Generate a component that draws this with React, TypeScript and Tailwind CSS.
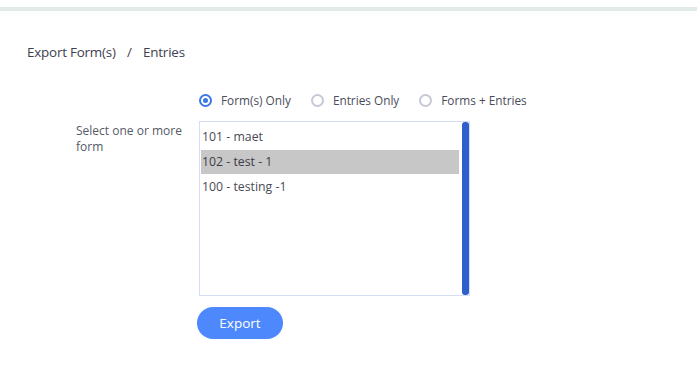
import { useState } from "react";

const forms = [
    { id: "101", label: "101 - maet" },
    { id: "102", label: "102 - test - 1" },
    { id: "100", label: "100 - testing -1" },
];

const modes = ["Form(s) Only", "Entries Only", "Forms + Entries"];

function Radio({ checked, label, onClick }: { checked: boolean; label: string; onClick: () => void }) {
    return (
        <button className="flex items-center gap-[9px]" onClick={onClick}>
            <span
                className={
                    checked
                        ? "w-[13px] h-[13px] rounded-full border-2 border-[#3b78e7] flex items-center justify-center"
                        : "w-[13px] h-[13px] rounded-full border-2 border-[#c4c9d4]"
                }
            >
                {checked && <span className="w-[5px] h-[5px] rounded-full bg-[#3b78e7]" />}
            </span>
            <span className="text-[11.8px] text-[#4a4d5a]">{label}</span>
        </button>
    );
}

export default function App() {
    const [mode, setMode] = useState(0);
    const [selected, setSelected] = useState("102");

    return (
        <div className="w-[697px] h-[391px] bg-white font-['Open_Sans',sans-serif]">
            <div className="h-[7px]" />
            <div className="h-[4px] bg-[#e2e9e9]" />

            <div className="pl-[27px] pt-[31px] text-[13.4px] text-[#3d4150] tracking-[-0.2px]">
                Export Form(s) <span className="mx-[8px]">/</span> Entries
            </div>

            <div className="pl-[199px] pt-[30px] flex gap-[20px]">
                {modes.map((m, i) => (
                    <Radio key={m} checked={mode === i} label={m} onClick={() => setMode(i)} />
                ))}
            </div>

            <div className="flex mt-[11px]">
                <div className="w-[123px] pl-[76px] pr-0 pt-[2px] text-[12px] leading-[16px] text-[#555a66] shrink-0 box-content">
                    Select one or more form
                </div>
                <div className="w-[271px] h-[175px] border border-[#d3def5] relative overflow-hidden">
                    <div className="pt-[2px] pl-px pr-[10px]">
                        {forms.map((f) => (
                            <div
                                key={f.id}
                                onClick={() => setSelected(f.id)}
                                className={
                                    selected === f.id
                                        ? "h-[24px] mt-px px-[1px] flex items-center bg-[#c7c7c7] text-[12.3px] text-[#3d3d48]"
                                        : "h-[24px] mt-px px-[1px] flex items-center text-[12.3px] text-[#4a4a55]"
                                }
                            >
                                {f.label}
                            </div>
                        ))}
                    </div>
                    <div className="absolute right-[0px] top-0 bottom-0 w-[7px] rounded-[3px] bg-[#2e5fcd]" />
                </div>
            </div>

            <div className="pl-[197px] pt-[11px]">
                <button className="w-[86px] h-[32px] rounded-full bg-[#4d89fd] text-white text-[13.5px]">
                    Export
                </button>
            </div>
        </div>
    );
}
